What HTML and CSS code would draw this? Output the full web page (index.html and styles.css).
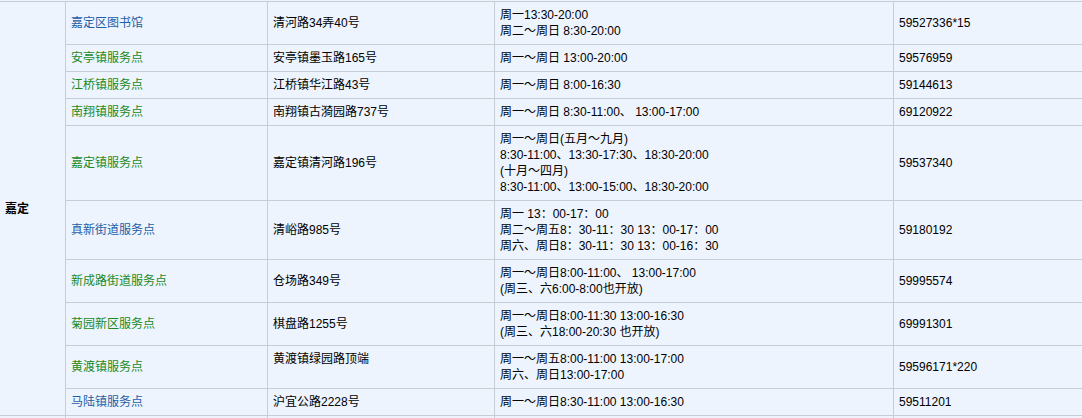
FILE: index.html
```html
<!DOCTYPE html>
<html lang="zh-CN">
<head>
<meta charset="utf-8">
<title>嘉定服务点</title>
<link rel="stylesheet" href="styles.css">
</head>
<body>
<table class="sites">
  <colgroup>
    <col class="c-district">
    <col class="c-name">
    <col class="c-addr">
    <col class="c-hours">
    <col class="c-phone">
  </colgroup>
  <tbody>
    <tr>
      <td class="district" rowspan="10">嘉定</td>
      <td><a class="link blue" href="#">嘉定区图书馆</a></td>
      <td>清河路34弄40号</td>
      <td>周一13:30-20:00<br>周二～周日 8:30-20:00</td>
      <td class="phone">59527336*15</td>
    </tr>
    <tr>
      <td><a class="link green" href="#">安亭镇服务点</a></td>
      <td>安亭镇墨玉路165号</td>
      <td>周一～周日 13:00-20:00</td>
      <td class="phone">59576959</td>
    </tr>
    <tr>
      <td><a class="link green" href="#">江桥镇服务点</a></td>
      <td>江桥镇华江路43号</td>
      <td>周一～周日 8:00-16:30</td>
      <td class="phone">59144613</td>
    </tr>
    <tr>
      <td><a class="link green" href="#">南翔镇服务点</a></td>
      <td>南翔镇古漪园路737号</td>
      <td>周一～周日 8:30-11:00、 13:00-17:00</td>
      <td class="phone">69120922</td>
    </tr>
    <tr>
      <td><a class="link green" href="#">嘉定镇服务点</a></td>
      <td>嘉定镇清河路196号</td>
      <td>周一～周日(五月～九月)<br>8:30-11:00、13:30-17:30、18:30-20:00<br>(十月～四月)<br>8:30-11:00、13:00-15:00、18:30-20:00</td>
      <td class="phone">59537340</td>
    </tr>
    <tr>
      <td><a class="link blue" href="#">真新街道服务点</a></td>
      <td>清峪路985号</td>
      <td>周一 13：00-17：00<br>周二～周五8：30-11：30 13：00-17：00<br>周六、周日8：30-11：30 13：00-16：30</td>
      <td class="phone">59180192</td>
    </tr>
    <tr>
      <td><a class="link green" href="#">新成路街道服务点</a></td>
      <td>仓场路349号</td>
      <td>周一～周日8:00-11:00、 13:00-17:00<br>(周三、六6:00-8:00也开放)</td>
      <td class="phone">59995574</td>
    </tr>
    <tr>
      <td><a class="link green" href="#">菊园新区服务点</a></td>
      <td>棋盘路1255号</td>
      <td>周一～周日8:00-11:30 13:00-16:30<br>(周三、六18:00-20:30 也开放)</td>
      <td class="phone">69991301</td>
    </tr>
    <tr>
      <td><a class="link green" href="#">黄渡镇服务点</a></td>
      <td class="top">黄渡镇绿园路顶端</td>
      <td>周一～周五8:00-11:00 13:00-17:00<br>周六、周日13:00-17:00</td>
      <td class="phone">59596171*220</td>
    </tr>
    <tr>
      <td><a class="link blue" href="#">马陆镇服务点</a></td>
      <td>沪宜公路2228号</td>
      <td>周一～周日8:30-11:00 13:00-16:30</td>
      <td class="phone">59511201</td>
    </tr>
    <tr class="next">
      <td></td><td></td><td></td><td></td><td class="phone"></td>
    </tr>
  </tbody>
</table>
</body>
</html>
```

FILE: styles.css
```css
html, body {
  margin: 0;
  padding: 0;
  background: #edf4fe;
  overflow: hidden;
}

.sites {
  margin-top: 1px;
  width: 1082px;
  table-layout: fixed;
  border-collapse: separate;
  border-spacing: 0;
  border-top: 1px solid #c9cdd2;
  font-family: "Liberation Sans", "Noto Sans CJK SC", sans-serif;
  font-size: 12px;
  line-height: 16px;
  color: #000;
}

.c-district { width: 66px; }
.c-name { width: 202px; }
.c-addr { width: 227px; }
.c-hours { width: 399px; }
.c-phone { width: 188px; }

.sites td {
  box-sizing: border-box;
  padding: 5px 4px 5px 5px;
  border-right: 1px solid #c9cdd2;
  border-bottom: 1px solid #c9cdd2;
  vertical-align: middle;
  white-space: nowrap;
  overflow: hidden;
}

.sites td.phone {
  border-right: none;
}

.sites td.top {
  vertical-align: top;
}

.sites td.district {
  font-weight: bold;
}

.sites .next td {
  height: 2px;
  padding: 0;
  border-bottom: none;
}

.link {
  text-decoration: none;
}

.link.blue {
  color: #1d5fa8;
}

.link.green {
  color: #1a8a1f;
}
```
